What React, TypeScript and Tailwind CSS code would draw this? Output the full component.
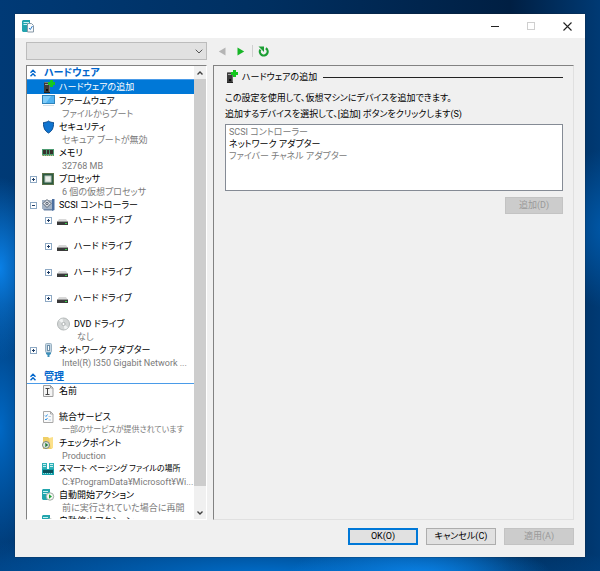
import { useState } from "react"
import type { ReactNode } from "react"

type Item = {
  id: string
  title: string
  sub?: string
  icon: ReactNode
  toggle?: "plus" | "minus"
  level?: number
  height?: string
  longTitle?: boolean
  longSub?: boolean
}

function ServerPlusIcon() {
  return (
    <svg viewBox="0 0 14 14" className="w-[14px] h-[14px]" aria-hidden="true">
      <path d="M2 3l1-1h5v11H2z" fill="#3c3c3c" />
      <path d="M2 3l1-1h5v1z" fill="#7a7a7a" />
      <rect x="3" y="4" width="3" height="1" fill="#a5a5a5" />
      <rect x="4" y="9" width="2" height="2" fill="#0c0c0c" />
      <rect x="7" y="3" width="1" height="10" fill="#6e6e6e" />
      <path d="M2 12h6v1H2z" fill="#222" />
      <path d="M8 0h3v2h2v3h-2v2H8V5H6V2h2z" fill="#14c81e" />
    </svg>
  )
}

function MonitorIcon() {
  return (
    <svg viewBox="0 0 14 14" className="w-[14px] h-[14px]" aria-hidden="true">
      <rect x="0.5" y="1.500" width="12" height="8" fill="#4fb2f0" stroke="#2f83ba" />
      <path d="M1 2h8L4 9H1z" fill="#7fccf8" />
      <rect x="1" y="11" width="11" height="1" fill="#d3dfe7" />
    </svg>
  )
}

function ShieldIcon() {
  return (
    <svg viewBox="0 0 14 14" className="w-[14px] h-[14px]" aria-hidden="true">
      <path
        d="M6.500 1c1.500 1.200 3.300 1.500 5 1.500.2 5.300-1.300 8.500-5 10.500-3.700-2-5.200-5.200-5-10.500 1.700 0 3.500-.3 5-1.500z"
        fill="#0f74d0"
        stroke="#0c4c8f"
      />
    </svg>
  )
}

function MemoryIcon() {
  return (
    <svg viewBox="0 0 14 14" className="w-[14px] h-[14px]" aria-hidden="true">
      <rect x="0" y="3" width="12" height="7" fill="#4c9a70" />
      <path d="M1 4h3v4H1zM5 4h2v4H5zM8 4h3v4H8z" fill="#37302c" />
      <path d="M0 9.500h12" stroke="#c2b676" strokeDasharray="1 1" />
    </svg>
  )
}

function CpuIcon() {
  return (
    <svg viewBox="0 0 14 14" className="w-[14px] h-[14px]" aria-hidden="true">
      <rect x="0" y="1" width="12" height="12" fill="#2c5a42" />
      <rect x="0.500" y="1.500" width="11" height="11" fill="none" stroke="#8a8a52" strokeDasharray="1 1" />
      <rect x="3" y="4" width="6" height="6" fill="#e9eeea" stroke="#b9c7bd" />
    </svg>
  )
}

function ScsiIcon() {
  return (
    <svg viewBox="0 0 14 14" className="w-[14px] h-[14px]" aria-hidden="true">
      <path d="M0 2h12v9H0z" fill="#a3b3c6" />
      <path d="M10 1h2.500v11L10 13z" fill="#4c6f9f" />
      <path d="M1 11h9v1.500H2z" fill="#6f86a6" />
      <path d="M5 1.500l4 4-4 4-4-4z" fill="#eef1f5" stroke="#55606f" />
      <circle cx="5" cy="5.500" r="1.300" fill="#c5ccd5" stroke="#55606f" />
    </svg>
  )
}

function DriveIcon() {
  return (
    <svg viewBox="0 0 14 14" className="w-[14px] h-[14px]" aria-hidden="true">
      <path d="M2 6h7l2 3H0z" fill="#d8d8d8" />
      <rect x="0" y="9" width="11" height="3" fill="#3a3a3a" />
      <rect x="0" y="8" width="11" height="1" fill="#9a9a9a" />
      <rect x="8" y="10" width="2" height="1" fill="#35d04a" />
    </svg>
  )
}

function DiscIcon() {
  return (
    <svg viewBox="0 0 14 14" className="w-[14px] h-[14px]" aria-hidden="true">
      <circle cx="6.500" cy="7" r="6" fill="#d3d6d6" stroke="#b3b8b8" />
      <path d="M6.500 7L2 3.500A6 6 0 0 1 5.500 1.500zM6.500 7L11 10.500A6 6 0 0 1 7.500 12.500z" fill="#f1f3f3" />
      <circle cx="6.500" cy="7" r="1.600" fill="#fff" stroke="#adb2b2" />
    </svg>
  )
}

function NetworkIcon() {
  return (
    <svg viewBox="0 0 14 14" className="w-[14px] h-[14px]" aria-hidden="true">
      <rect x="3.500" y="0.500" width="6" height="9" rx="1" fill="#c3d6e4" stroke="#9db3c3" />
      <rect x="5.500" y="2.500" width="2" height="5" fill="#fff" stroke="#6d8fa9" />
      <path d="M4 9.500h5V11l-1.500 1v2h-2v-2L4 11z" fill="#3d8fb9" />
    </svg>
  )
}

function NameIcon() {
  return (
    <svg viewBox="0 0 14 14" className="w-[14px] h-[14px]" aria-hidden="true">
      <path d="M1.500 1.500h7l2.500 2.500v8.500H1.500z" fill="#f4f4f4" stroke="#9e9e9e" />
      <path d="M8.500 1.500V4H11" fill="none" stroke="#9e9e9e" />
      <path d="M3.500 4.500h4M5.500 4.500v6M3.500 10.500h4" stroke="#444" fill="none" />
    </svg>
  )
}

function ServicesIcon() {
  return (
    <svg viewBox="0 0 14 14" className="w-[14px] h-[14px]" aria-hidden="true">
      <path d="M1.500 1.500h7l2.500 2.500v8.500H1.500z" fill="#fafafa" stroke="#a8a8a8" />
      <path d="M8.500 1.500V4H11" fill="none" stroke="#a8a8a8" />
      <path d="M3 5.500l1 1 1.500-2M3 9l1 1 1.500-2" stroke="#2f93e6" fill="none" />
      <path d="M6.500 6.500H9M6.500 10H9" stroke="#b5cbdc" />
    </svg>
  )
}

function CheckpointIcon() {
  return (
    <svg viewBox="0 0 14 14" className="w-[14px] h-[14px]" aria-hidden="true">
      <path d="M1 1h5l1 1h3v11H1z" fill="#f0cf66" />
      <path d="M7 2l4-1v11l-2 1z" fill="#fbe08a" />
      <circle cx="4" cy="9" r="3.500" fill="#dfe5df" stroke="#77857c" />
      <path d="M3.300 6.800l3 2.200-3 2.200z" fill="#1f7a35" />
    </svg>
  )
}

function PagingIcon() {
  return (
    <svg viewBox="0 0 14 14" className="w-[14px] h-[14px]" aria-hidden="true">
      <path d="M0 1h5v7H0zM7 1h5v7H7z" fill="#2fb0b6" />
      <path d="M1 2.500h3M1 4.500h3M8 2.500h3M8 4.500h3" stroke="#c8f0f1" />
      <rect x="0" y="7" width="12" height="6" fill="#12a0aa" />
      <path d="M1 8h10v3H1z" fill="#0b525c" />
      <path d="M1 11.500h10" stroke="#8bdde0" strokeDasharray="1 1" />
    </svg>
  )
}

function StartActionIcon() {
  return (
    <svg viewBox="0 0 14 14" className="w-[14px] h-[14px]" aria-hidden="true">
      <path d="M0 2l1-1h7v11H1l-1-1z" fill="#22a5ad" />
      <path d="M1 3.500h5M1 5.500h5" stroke="#c4f0f0" />
      <circle cx="8" cy="8.500" r="3.700" fill="#f5f8f5" stroke="#a0aaa3" />
      <path d="M7 6.300l3 2.200-3 2.200z" fill="#22a53a" />
    </svg>
  )
}

const hardware: Item[] = [
  { id: "add", title: "ハードウェアの追加", icon: <ServerPlusIcon />, height: "h-[14px]" },
  { id: "firmware", title: "ファームウェア", sub: "ファイルからブート", icon: <MonitorIcon /> },
  { id: "security", title: "セキュリティ", sub: "セキュア ブートが無効", icon: <ShieldIcon /> },
  { id: "memory", title: "メモリ", sub: "32768 MB", icon: <MemoryIcon /> },
  { id: "cpu", title: "プロセッサ", sub: "6 個の仮想プロセッサ", icon: <CpuIcon />, toggle: "plus" },
  { id: "scsi", title: "SCSI コントローラー", icon: <ScsiIcon />, toggle: "minus", height: "h-[15px]" },
  { id: "hdd0", title: "ハード ドライブ", icon: <DriveIcon />, toggle: "plus", level: 1 },
  { id: "hdd1", title: "ハード ドライブ", icon: <DriveIcon />, toggle: "plus", level: 1 },
  { id: "hdd2", title: "ハード ドライブ", icon: <DriveIcon />, toggle: "plus", level: 1 },
  { id: "hdd3", title: "ハード ドライブ", icon: <DriveIcon />, toggle: "plus", level: 1 },
  { id: "dvd", title: "DVD ドライブ", sub: "なし", icon: <DiscIcon />, level: 1 },
  { id: "net", title: "ネットワーク アダプター", sub: "Intel(R) I350 Gigabit Network ...", icon: <NetworkIcon />, toggle: "plus" },
]

const management: Item[] = [
  { id: "name", title: "名前", icon: <NameIcon /> },
  { id: "services", title: "統合サービス", sub: "一部のサービスが提供されています", icon: <ServicesIcon />, longSub: true },
  { id: "checkpoint", title: "チェックポイント", sub: "Production", icon: <CheckpointIcon /> },
  { id: "paging", title: "スマート ページング ファイルの場所", sub: "C:¥ProgramData¥Microsoft¥Wi...", icon: <PagingIcon />, longTitle: true },
  { id: "autostart", title: "自動開始アクション", sub: "前に実行されていた場合に再開", icon: <StartActionIcon /> },
  { id: "autostop", title: "自動停止アクション", icon: <StartActionIcon /> },
]

function Toggle({ kind }: { kind: "plus" | "minus" }) {
  return (
    <svg viewBox="0 0 7 7" className="w-[7px] h-[7px]" aria-hidden="true">
      <rect x="0.500" y="0.500" width="6" height="6" fill="#fff" stroke="#8ea9c4" />
      <path d={kind === "plus" ? "M2 3.500h3M3.500 2v3" : "M2 3.500h3"} stroke="#1f3d66" />
    </svg>
  )
}

function TreeItem({ item, active, onSelect }: { item: Item; active: boolean; onSelect: () => void }) {
  return (
    <li>
      <button
        type="button"
        onClick={onSelect}
        className={`flex w-full items-start text-left ${item.level ? "pl-[18px]" : "pl-[3px]"} ${
          item.height || "h-[26px]"
        } ${active ? "bg-[#0078d7] text-white" : "text-black"}`}
      >
        <span className="flex w-3 h-[14px] shrink-0 items-center">
          {item.toggle && <Toggle kind={item.toggle} />}
        </span>
        <span className="w-[14px] shrink-0">{item.icon}</span>
        <span className="ml-[3px] min-w-0 whitespace-nowrap">
          <span className={`block leading-[14px] ${item.longTitle ? "text-[8px]" : ""}`}>{item.title}</span>
          {item.sub && (
            <span className={`block pl-[3px] leading-[12px] text-[#7a7a7a] ${item.longSub ? "text-[8px]" : ""}`}>
              {item.sub}
            </span>
          )}
        </span>
      </button>
    </li>
  )
}

function SectionHeader({ title }: { title: string }) {
  return (
    <h2 className="flex h-[14px] items-center border-b border-b-[#4a9be8] pl-[3px] text-[10px] font-bold leading-[13px] text-[#0066cc]">
      <svg viewBox="0 0 6 8" className="mr-2 w-[6px] h-2" fill="none" stroke="#0066cc" strokeWidth="1.400" aria-hidden="true">
        <path d="M0.500 3.800L3 1.200l2.500 2.600M0.500 7.300L3 4.700l2.500 2.600" />
      </svg>
      {title}
    </h2>
  )
}

function ScrollBar() {
  return (
    <div className="flex w-3 shrink-0 flex-col bg-[#f0f0f0]">
      <button type="button" aria-label="上へスクロール" className="flex h-[13px] items-center justify-center">
        <svg viewBox="0 0 6 4" className="w-[6px] h-1" fill="none" stroke="#404040" strokeWidth="1.400" aria-hidden="true">
          <path d="M0.500 3.500L3 1l2.500 2.500" />
        </svg>
      </button>
      <div className="grow-[20] bg-[#cdcdcd]" />
      <div className="grow" />
      <button type="button" aria-label="下へスクロール" className="flex h-[13px] items-center justify-center">
        <svg viewBox="0 0 6 4" className="w-[6px] h-1" fill="none" stroke="#404040" strokeWidth="1.400" aria-hidden="true">
          <path d="M0.500 0.500L3 3l2.500-2.500" />
        </svg>
      </button>
    </div>
  )
}

function TitleBar() {
  return (
    <header className="flex h-6 shrink-0 items-center justify-between bg-white pl-[7px] pr-[13px]">
      <svg viewBox="0 0 13 13" className="w-[13px] h-[13px]" aria-hidden="true">
        <path d="M0 1l1-1h7v12H1l-1-1z" fill="#23a3ae" />
        <path d="M1.500 2.500H7M1.500 4.500H6" stroke="#c9f2f4" />
        <path d="M5.500 3.500h4l2 2v6.500h-6z" fill="#f8fafc" stroke="#8798a6" />
        <path d="M7 8l1.300 1.500L10.500 6" stroke="#2d7cc9" fill="none" />
      </svg>
      <div className="flex items-center gap-7">
        <button type="button" aria-label="最小化" className="flex h-2 w-2 items-center">
          <span className="h-px w-2 bg-[#222]" />
        </button>
        <button type="button" aria-label="最大化" disabled className="h-2 w-2 border border-[#cfcfcf]" />
        <button type="button" aria-label="閉じる" className="h-[9px] w-[9px]">
          <svg viewBox="0 0 9 9" className="h-[9px] w-[9px]" stroke="#222" strokeWidth="1.100" aria-hidden="true">
            <path d="M0.500 0.500l8 8M8.500 0.500l-8 8" />
          </svg>
        </button>
      </div>
    </header>
  )
}

function Toolbar() {
  return (
    <div className="flex shrink-0 items-center px-[11px] pb-[5px] pt-1">
      <div className="grid w-[181px] items-center">
        <select
          aria-label="仮想マシン"
          disabled
          className="col-start-1 row-start-1 h-[18px] appearance-none border border-[#bcbcbc] bg-[#e1e1e1] opacity-100"
        />
        <svg viewBox="0 0 8 5" className="col-start-1 row-start-1 mr-1 h-[5px] w-2 justify-self-end" fill="none" stroke="#555" aria-hidden="true">
          <path d="M0.700 0.700L4 4 7.300 0.700" />
        </svg>
      </div>
      <button type="button" aria-label="前へ" disabled className="ml-[11px]">
        <svg viewBox="0 0 8 9" className="h-[9px] w-2" aria-hidden="true">
          <path d="M7.500 0.500v8L0.800 4.500z" fill="#b4b4b4" />
        </svg>
      </button>
      <button type="button" aria-label="次へ" className="ml-[11px]">
        <svg viewBox="0 0 8 9" className="h-[9px] w-2" aria-hidden="true">
          <path d="M0.500 0.500v8l6.700-4z" fill="#17b526" />
        </svg>
      </button>
      <span className="ml-[7px] h-3 w-px bg-[#cfcfcf]" />
      <button type="button" aria-label="最新の情報に更新" className="ml-[5px]">
        <svg viewBox="0 0 11 11" className="h-[11px] w-[11px]" aria-hidden="true">
          <path d="M7.800 2.300A3.900 3.900 0 1 1 2.400 3.600" fill="none" stroke="#1b9e33" strokeWidth="2.200" />
          <path d="M0.500 0.500h5.500v5.500z" fill="#1b9e33" />
        </svg>
      </button>
    </div>
  )
}

export default function App() {
  const [selected, setSelected] = useState("add")

  return (
    <div className="flex h-screen flex-col bg-[radial-gradient(ellipse_22%_7%_at_70%_101%,#0a84ea_0%,transparent_100%),radial-gradient(ellipse_60%_9%_at_45%_101%,#0070cf_0%,transparent_100%),radial-gradient(ellipse_7%_16%_at_0%_47%,#0a80e6_0%,transparent_100%),radial-gradient(ellipse_7%_22%_at_0%_75%,#0068c4_0%,transparent_100%),radial-gradient(ellipse_9%_14%_at_101%_40%,#0058a8_0%,transparent_100%),linear-gradient(90deg,#003a76_0%,#002f60_45%,#001f43_85%,#003a74_100%)] px-[15px] py-[14px] font-['Roboto','Noto_Sans_CJK_JP',sans-serif] text-[9px] text-black [font-feature-settings:'palt']">
      <main className="flex min-h-0 flex-1 flex-col bg-[#f0f0f0] shadow-[0_0_1px_#222]">

        <TitleBar />
        <Toolbar />

        <div className="flex min-h-0 flex-1 gap-[6px] px-[11px]">

          <nav className="flex w-[181px] shrink-0 border border-b-white border-l-[#828282] border-r-white border-t-[#828282] bg-white">
            <div className="min-w-0 flex-1 overflow-hidden">
              <SectionHeader title="ハードウェア" />
              <ul>
                {hardware.map(item => (
                  <TreeItem key={item.id} item={item} active={item.id === selected} onSelect={() => setSelected(item.id)} />
                ))}
              </ul>
              <div className="h-px" />
              <SectionHeader title="管理" />
              <ul>
                {management.map(item => (
                  <TreeItem key={item.id} item={item} active={item.id === selected} onSelect={() => setSelected(item.id)} />
                ))}
              </ul>
            </div>
            <ScrollBar />
          </nav>

          <section className="min-w-0 flex-1 border border-b-[#e0e0e0] border-l-[#828282] border-r-[#e0e0e0] border-t-[#828282] pl-[11px] pr-[10px] pt-1">
            <div className="flex items-center">
              <ServerPlusIcon />
              <h1 className="ml-[3px] leading-[14px]">ハードウェアの追加</h1>
              <span className="ml-[6px] h-px flex-1 bg-[#222]" />
            </div>
            <p className="mt-[6px] leading-4">この設定を使用して、仮想マシンにデバイスを追加できます。</p>
            <label htmlFor="device" className="block leading-4">
              追加するデバイスを選択して、[追加] ボタンをクリックします(S)
            </label>
            <select
              id="device"
              size={5}
              className="mt-[2px] block h-[67px] w-full overflow-hidden border border-[#858b95] bg-white px-[3px]"
            >
              <option className="h-3 min-h-0 p-0 leading-3 text-[#7a7a7a]">SCSI コントローラー</option>
              <option className="h-3 min-h-0 p-0 leading-3 text-black">ネットワーク アダプター</option>
              <option className="h-3 min-h-0 p-0 leading-3 text-[#7a7a7a]">ファイバー チャネル アダプター</option>
            </select>
            <div className="mt-[6px] flex justify-end">
              <button type="button" disabled className="h-[17px] w-[58px] border border-[#c3c3c3] bg-[#cccccc] leading-[15px] text-[#999]">
                追加(D)
              </button>
            </div>
          </section>

        </div>

        <footer className="flex shrink-0 justify-end gap-2 px-[11px] pb-3 pt-2">
          <button type="button" className="h-[17px] w-[70px] border-2 border-[#0078d7] bg-[#e1e1e1] leading-[13px]">
            OK(O)
          </button>
          <button type="button" className="h-[17px] w-[70px] border border-[#adadad] bg-[#e1e1e1] leading-[15px]">
            キャンセル(C)
          </button>
          <button type="button" disabled className="h-[17px] w-[70px] border border-[#c3c3c3] bg-[#cccccc] leading-[15px] text-[#999]">
            適用(A)
          </button>
        </footer>

      </main>
    </div>
  )
}
